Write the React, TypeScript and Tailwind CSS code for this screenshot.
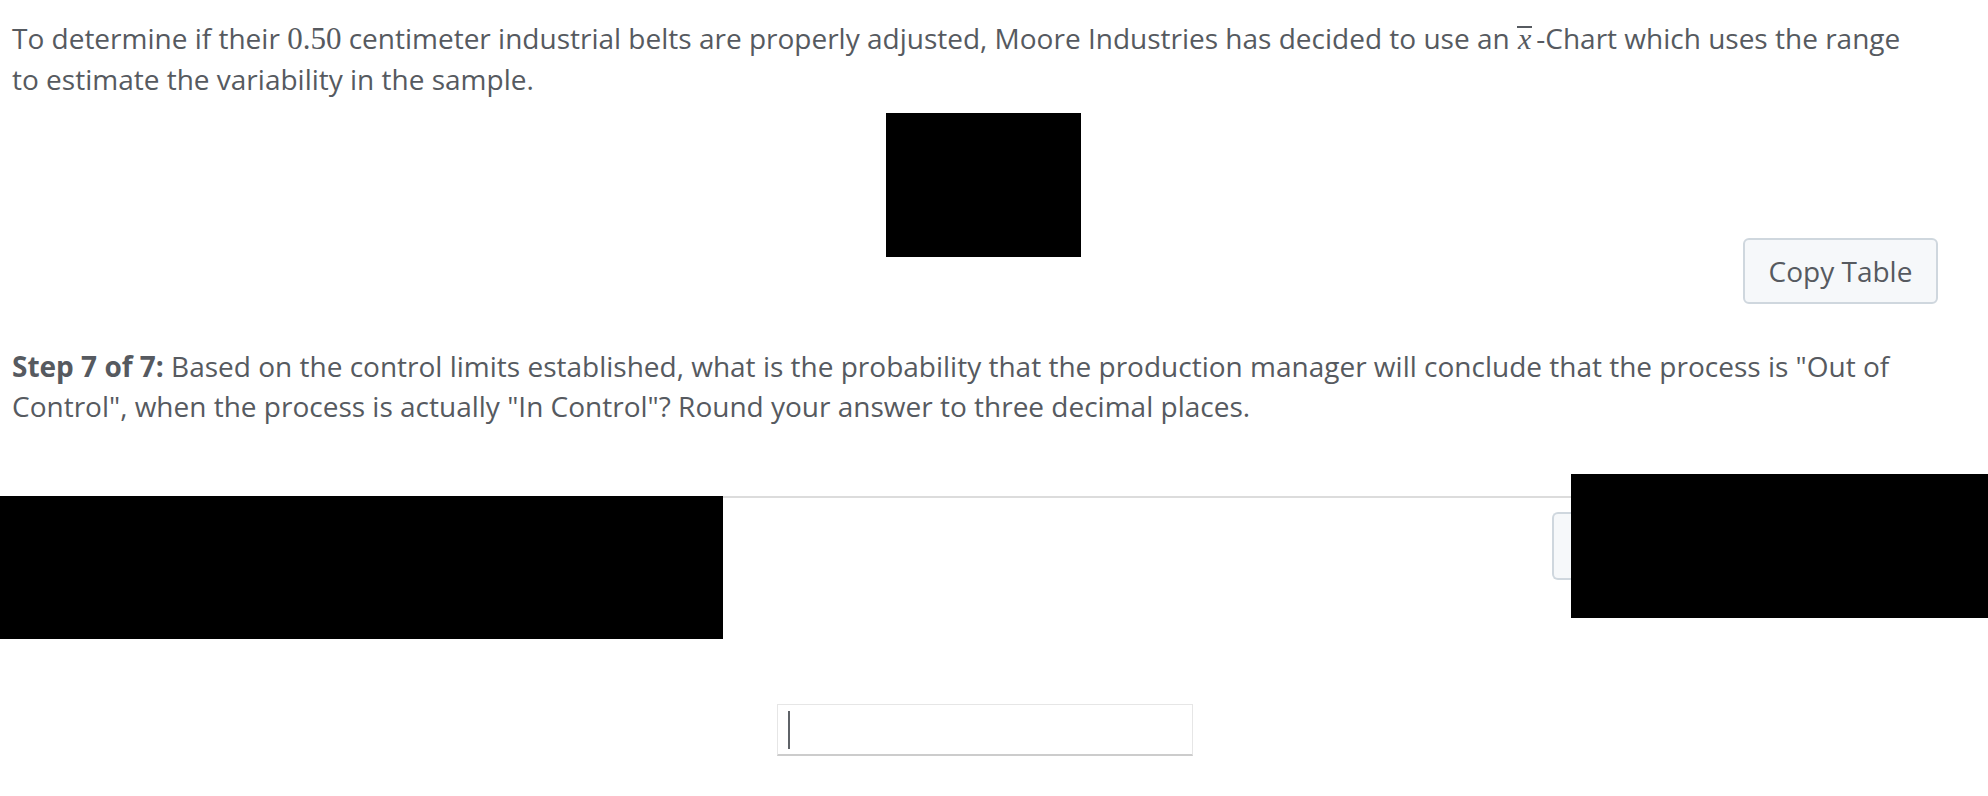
export default function App() {
  return (
    <div className="min-h-screen bg-white font-['Open_Sans',sans-serif] text-[28px] leading-[40px] text-[#565a60]">
      {/* Question intro */}
      <div className="pl-3 pr-[50px] pt-[18px]">
        <p className="pr-[16px]">
          To determine if their{' '}
          <span className="font-['Liberation_Serif',serif] text-[31px]">0.50</span> centimeter industrial belts
          are properly adjusted, Moore Industries has decided to use an{' '}
          <span className="inline-block font-['Liberation_Serif',serif] italic text-[30px] leading-[22px] border-t-2 border-[#565a60] px-[1px]">
            x
          </span>
          <span className="ml-1">-Chart which uses the range to estimate the variability in the sample.</span>
        </p>

        {/* Table image + copy button */}
        <div className="flex items-start mt-[14px]">
          <div className="ml-[874px] w-[195px] h-[144px] bg-black" />
          <div className="flex-1" />
          <button className="mt-[125px] w-[195px] h-[66px] rounded-md border-2 border-[#cfd7de] bg-[#f6f8fa] text-[28px] text-[#565a60]">
            Copy Table
          </button>
        </div>

        {/* Step text */}
        <p className="mt-[42px]">
          <span className="font-bold">Step 7 of 7:</span> Based on the control limits established, what is the
          probability that the production manager will conclude that the process is "Out of Control", when the
          process is actually "In Control"? Round your answer to three decimal places.
        </p>
      </div>

      {/* Answer area */}
      <div className="flex items-start mt-[48px]">
        <div className="mt-[22px] w-[723px] h-[143px] bg-black shrink-0" />
        <div className="flex-1 mt-[22px] border-t-2 border-[#dcdcdc]">
          <div className="flex justify-end">
            <div className="mt-[14px] w-[19px] h-[68px] rounded-l-md border-2 border-r-0 border-[#cfd7de] bg-[#f6f8fa]" />
          </div>
        </div>
        <div className="w-[417px] h-[144px] bg-black shrink-0" />
      </div>

      {/* Input */}
      <div className="mt-[65px] ml-[777px] w-[416px] h-[52px] border border-[#e6e6e6] border-b-2 border-b-[#cccccc] bg-white flex">
        <div className="ml-[10px] mt-[6px] w-[2px] h-[38px] bg-[#5f6368]" />
      </div>
    </div>
  );
}
